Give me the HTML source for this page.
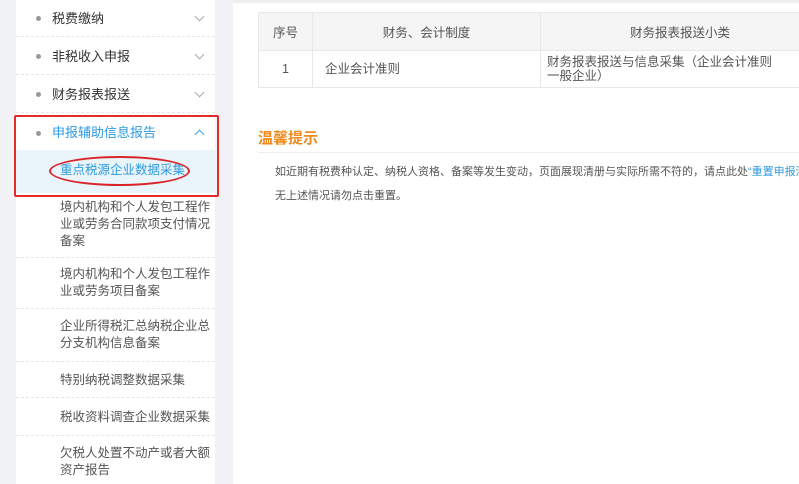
<!DOCTYPE html>
<html><head><meta charset="utf-8"><style>
*{margin:0;padding:0;box-sizing:border-box}
body{width:799px;height:484px;overflow:hidden;background:#f0f2f5;font-family:"Liberation Sans","Noto Sans CJK SC",sans-serif;position:relative}
.side{position:absolute;left:16px;top:0;width:199px;height:484px;background:#fff}
.it{position:absolute;left:0;width:199px;border-bottom:1px dashed #e6e6e6;font-size:13px;color:#333}
.top{height:37px;line-height:37px;padding-left:36px}
.top:before{content:"";position:absolute;left:20px;top:16px;width:5px;height:5px;border-radius:50%;background:#999}
.chev{position:absolute;right:12px;top:13px;width:7px;height:7px;border-right:1px solid #aaa;border-bottom:1px solid #aaa;transform:rotate(45deg)}
.up{top:16px;transform:rotate(-135deg);border-color:#3aa3e3}
.sub{font-size:12.5px;color:#555;padding:6px 2px 0 44px;line-height:17px}
.main{position:absolute;left:233px;top:0;width:566px;height:484px;background:#fff}
table{position:absolute;left:25px;top:12px;width:562px;border-collapse:collapse;font-size:12.5px;color:#555}
td,th{border:1px solid #e8e8e8;font-weight:normal}
th{background:#f5f5f5;height:38px}
td{height:37px;line-height:14px}
</style></head><body>
<div class="side">
<div class="it top" style="top:0">税费缴纳<span class="chev"></span></div>
<div class="it top" style="top:38px">非税收入申报<span class="chev"></span></div>
<div class="it top" style="top:76px">财务报表报送<span class="chev"></span></div>
<div class="it top" style="top:115px;color:#2d9be0;border:none;height:35px;line-height:35px">申报辅助信息报告<span class="chev up"></span></div>
<div class="it" style="top:150px;height:43px;background:#eaf4fb;border:none;color:#2d9be0;font-size:12.5px;line-height:40px;padding-left:44px">重点税源企业数据采集</div>
<div class="it sub" style="top:193px;height:65px">境内机构和个人发包工程作业或劳务合同款项支付情况备案</div>
<div class="it sub" style="top:258px;height:51px;padding-top:8px">境内机构和个人发包工程作业或劳务项目备案</div>
<div class="it sub" style="top:309px;height:53px;padding-top:9px">企业所得税汇总纳税企业总分支机构信息备案</div>
<div class="it sub" style="top:362px;height:36px;line-height:36px;padding-top:0">特别纳税调整数据采集</div>
<div class="it sub" style="top:398px;height:38px;line-height:38px;padding-top:0">税收资料调查企业数据采集</div>
<div class="it sub" style="top:436px;height:48px;padding-top:9px;border:none">欠税人处置不动产或者大额资产报告</div>
</div>
<div style="position:absolute;left:14px;top:115px;width:205px;height:82px;border:2px solid #e52a2a;border-radius:2px"></div>
<div style="position:absolute;left:49px;top:156px;width:141px;height:30px;border:2px solid #d9252a;border-radius:50%"></div>
<div class="main">
<div style="position:absolute;left:0;top:0;width:566px;height:3px;background:#eee"></div>
<table><tr><th style="width:54px">序号</th><th style="width:228px">财务、会计制度</th><th>财务报表报送小类</th></tr>
<tr><td style="text-align:center">1</td><td style="padding-left:12px">企业会计准则</td><td style="padding-left:6px"><div style="width:228px">财务报表报送与信息采集（企业会计准则一般企业）</div></td></tr></table>
<div style="position:absolute;left:25px;top:127px;font-size:15px;font-weight:bold;color:#f08a1c">温馨提示</div>
<div style="position:absolute;left:25px;top:152px;width:560px;border-top:1px solid #eee"></div>
<div style="position:absolute;left:42px;top:160px;font-size:11px;color:#555;white-space:nowrap;line-height:24px">如近期有税费种认定、纳税人资格、备案等发生变动，页面展现清册与实际所需不符的，请点此处<span style="color:#2d9be0">“重置申报清册”</span><br>无上述情况请勿点击重置。</div>
</div>
</body></html>
